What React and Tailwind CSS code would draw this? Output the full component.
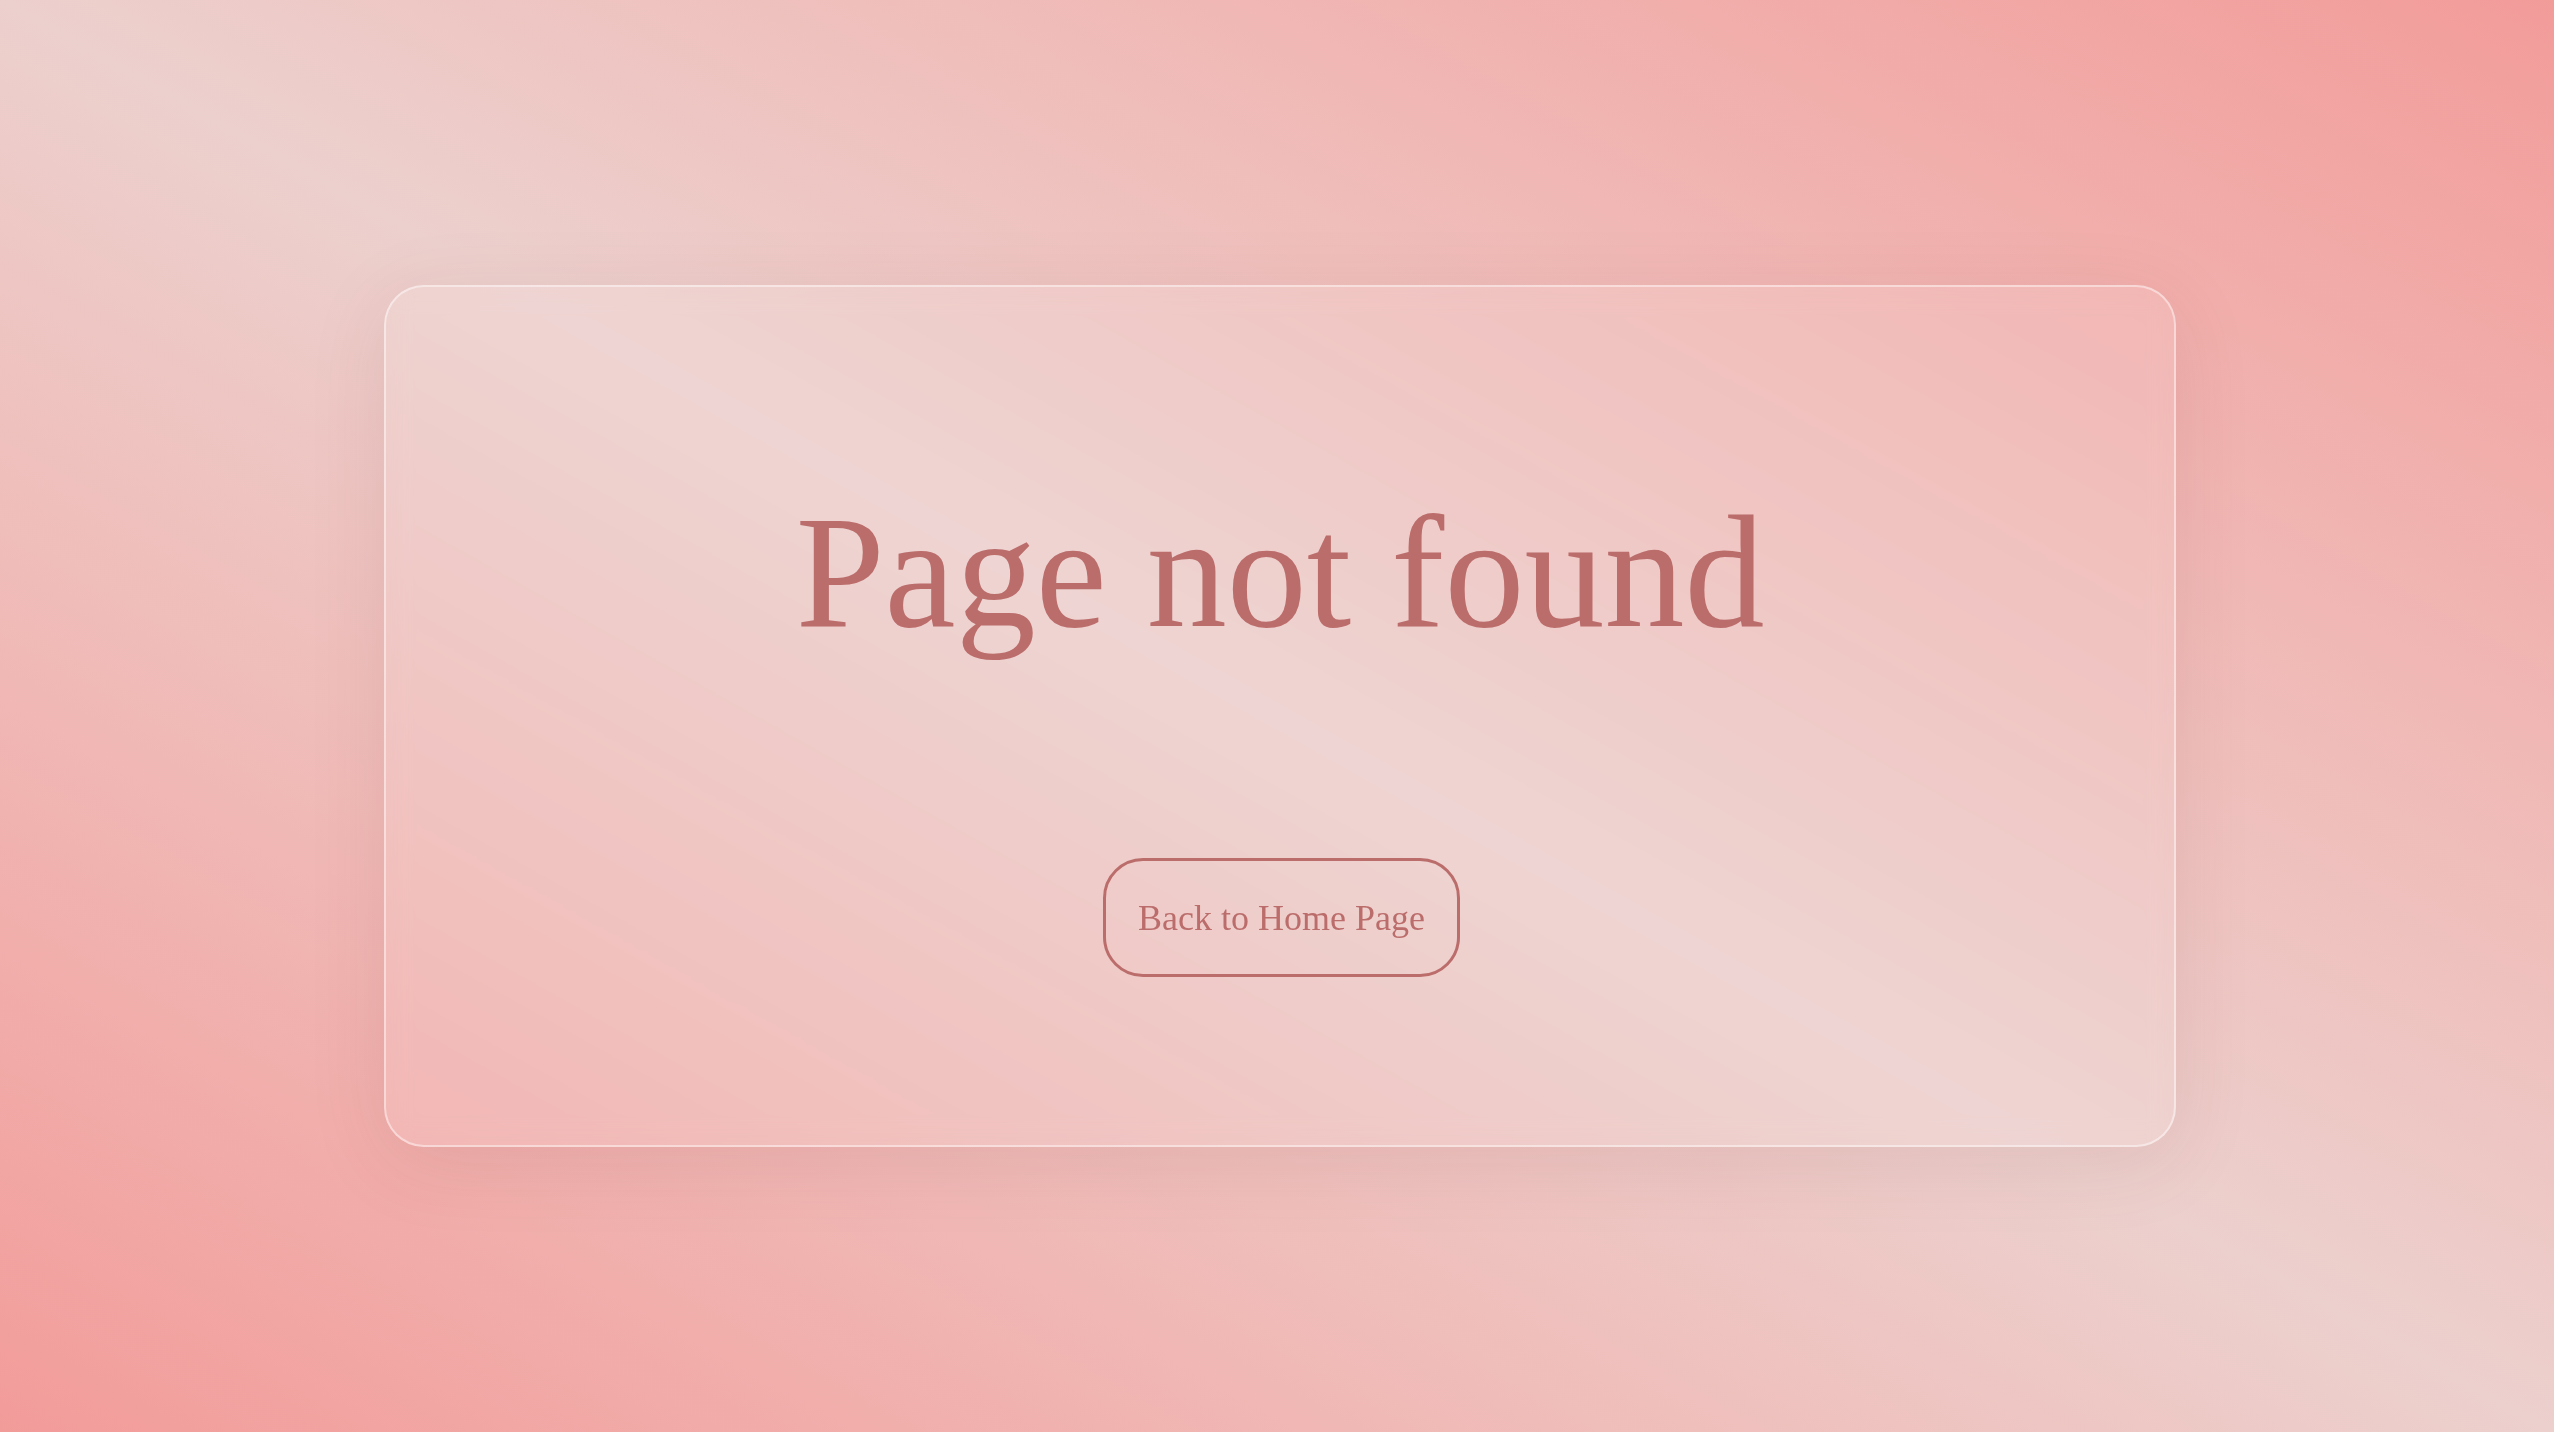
export default function App() {
  return (
    <div className="min-h-screen w-full flex items-center justify-center bg-linear-to-tr from-[#f29c9a] via-[#ecd0cd] to-[#f29c9a]" style={{ fontFamily: '"Liberation Serif", "Times New Roman", serif' }}>
      <div className="ml-[6px] w-[1792px] h-[862px] flex flex-col items-center pt-[205px] rounded-[40px] border-2 border-white/45 bg-white/10 backdrop-blur-md shadow-[0_16px_80px_rgba(120,40,40,0.10)]">
        <h1 className="text-[160px] leading-none font-normal text-[#bb6d6b]">Page not found</h1>
        <a
          href="#"
          className="mt-[206px] ml-[3px] h-[119px] px-8 flex items-center rounded-[40px] border-[3px] border-[#bb6d6b] text-[36px] leading-none text-[#bb6d6b]"
        >
          Back to Home Page
        </a>
      </div>
    </div>
  );
}
